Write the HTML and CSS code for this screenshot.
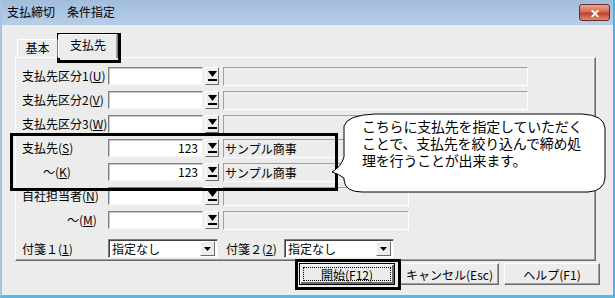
FILE: index.html
```html
<!DOCTYPE html>
<html lang="ja">
<head>
    <meta charset="UTF-8">
    <title>支払締切　条件指定</title>
    <link rel="stylesheet" href="styles.css">
</head>
<body>
    <div class="window">
        <div class="titlebar">
            <span class="title">支払締切　条件指定</span>
            <span class="close-btn">✕</span>
        </div>

        <div class="content">
            <div class="tabs">
                <div class="tab">基本</div>
                <div class="tab active">支払先</div>
            </div>

            <div class="panel">
                <div class="row">
                    <label class="lbl">支払先区分1(<u>U</u>)</label>
                    <div class="field"></div>
                    <div class="drop"><svg width="9" height="10" viewBox="0 0 9 10"><polygon points="0,0 9,0 4.5,6" fill="#000"/><rect x="0" y="8" width="9" height="2" fill="#000"/></svg></div>
                    <div class="name wide"></div>
                </div>
                <div class="row">
                    <label class="lbl">支払先区分2(<u>V</u>)</label>
                    <div class="field"></div>
                    <div class="drop"><svg width="9" height="10" viewBox="0 0 9 10"><polygon points="0,0 9,0 4.5,6" fill="#000"/><rect x="0" y="8" width="9" height="2" fill="#000"/></svg></div>
                    <div class="name wide"></div>
                </div>
                <div class="row">
                    <label class="lbl">支払先区分3(<u>W</u>)</label>
                    <div class="field"></div>
                    <div class="drop"><svg width="9" height="10" viewBox="0 0 9 10"><polygon points="0,0 9,0 4.5,6" fill="#000"/><rect x="0" y="8" width="9" height="2" fill="#000"/></svg></div>
                    <div class="name wide"></div>
                </div>
                <div class="row">
                    <label class="lbl">支払先(<u>S</u>)</label>
                    <div class="field num">123</div>
                    <div class="drop"><svg width="9" height="10" viewBox="0 0 9 10"><polygon points="0,0 9,0 4.5,6" fill="#000"/><rect x="0" y="8" width="9" height="2" fill="#000"/></svg></div>
                    <div class="name wide">サンプル商事</div>
                </div>
                <div class="row">
                    <label class="lbl to-k">～(<u>K</u>)</label>
                    <div class="field num">123</div>
                    <div class="drop"><svg width="9" height="10" viewBox="0 0 9 10"><polygon points="0,0 9,0 4.5,6" fill="#000"/><rect x="0" y="8" width="9" height="2" fill="#000"/></svg></div>
                    <div class="name wide">サンプル商事</div>
                </div>
                <div class="row">
                    <label class="lbl">自社担当者(<u>N</u>)</label>
                    <div class="field"></div>
                    <div class="drop"><svg width="9" height="10" viewBox="0 0 9 10"><polygon points="0,0 9,0 4.5,6" fill="#000"/><rect x="0" y="8" width="9" height="2" fill="#000"/></svg></div>
                    <div class="name short"></div>
                </div>
                <div class="row">
                    <label class="lbl to-m">～(<u>M</u>)</label>
                    <div class="field"></div>
                    <div class="drop"><svg width="9" height="10" viewBox="0 0 9 10"><polygon points="0,0 9,0 4.5,6" fill="#000"/><rect x="0" y="8" width="9" height="2" fill="#000"/></svg></div>
                    <div class="name short"></div>
                </div>
                <div class="row sel-row">
                    <label class="lbl">付箋１(<u>1</u>)</label>
                    <div class="select">
                        <span>指定なし</span>
                        <span class="sel-btn"><svg width="7" height="4" viewBox="0 0 7 4"><polygon points="0,0 7,0 3.5,4" fill="#000"/></svg></span>
                    </div>
                    <label class="lbl2">付箋２(<u>2</u>)</label>
                    <div class="select">
                        <span>指定なし</span>
                        <span class="sel-btn"><svg width="7" height="4" viewBox="0 0 7 4"><polygon points="0,0 7,0 3.5,4" fill="#000"/></svg></span>
                    </div>
                </div>
            </div>

            <div class="buttons">
                <button class="btn start"><span class="focus">開始(F12)</span></button>
                <button class="btn cancel">キャンセル(Esc)</button>
                <button class="btn help">ヘルプ(F1)</button>
            </div>
        </div>

        <!-- annotations drawn over the dialog -->
        <div class="mark mark-tab"></div>
        <div class="mark mark-rows"></div>
        <div class="mark mark-start"></div>

        <div class="bubble">
            <svg width="280" height="84" viewBox="0 0 280 84">
                <path d="M14 14 Q17 3 45 2 L252 2 Q274 3 275 16 L275 66 Q274 79 258 80 L32 80 Q15 80 14 68 L14 66 Q9 62 2 60 Q11 55 14 45 Z" fill="#fff" stroke="#000" stroke-width="1"/>
            </svg>
            <p class="bubble-text">こちらに支払先を指定していただく<br>ことで、支払先を絞り込んで締め処<br>理を行うことが出来ます。</p>
        </div>
    </div>
</body>
</html>
```

FILE: styles.css
```css
* {
    margin: 0;
    padding: 0;
    box-sizing: border-box;
}

body {
    width: 615px;
    height: 298px;
    overflow: hidden;
    font-family: "Noto Sans CJK JP", "Liberation Sans", sans-serif;
    font-size: 12px;
    color: #000;
    background: #fff;
}

u {
    text-decoration: underline;
    text-underline-offset: 1px;
}

.window {
    position: relative;
    width: 615px;
    height: 298px;
    background: #ececec;
    border-left: 2px solid #a9c4e2;
    border-right: 2px solid #49b2e6;
    border-bottom: 3px solid #52b9ea;
}

.titlebar {
    height: 25px;
    display: flex;
    align-items: center;
    padding: 0 3px 2px 5px;
    background: linear-gradient(#a2bddc, #b7cee8);
}

.title {
    font-size: 12px;
    line-height: 12px;
}

.close-btn {
    margin-left: auto;
    width: 31px;
    height: 17px;
    margin-top: 2px;
    border: 1px solid #6b2a22;
    border-radius: 3px;
    background: linear-gradient(#eca794, #d56a52 45%, #c0412b 55%, #dd8c74);
    color: #fff;
    font-size: 12px;
    font-weight: bold;
    line-height: 15px;
    text-align: center;
}

.content {
    padding: 9px 0 0 13px;
}

/* tabs */
.tabs {
    display: flex;
    align-items: flex-end;
    height: 23px;
    padding-left: 2px;
    position: relative;
    z-index: 1;
}

.tab {
    width: 41px;
    height: 18px;
    border-top: 1px solid #fff;
    border-left: 1px solid #fff;
    border-right: 1px solid #808080;
    text-align: center;
    line-height: 16px;
    background: #ececec;
    border-radius: 2px 2px 0 0;
}

.tab.active {
    width: 60px;
    height: 24px;
    margin-bottom: -1px;
    line-height: 20px;
    box-shadow: inset -1px 0 0 #a0a0a0;
}

/* main panel */
.panel {
    width: 581px;
    height: 204px;
    border-top: 1px solid #fff;
    border-left: 1px solid #fff;
    border-right: 1px solid #6a6a6a;
    border-bottom: 1px solid #6a6a6a;
    box-shadow: inset -1px -1px 0 #a0a0a0;
    padding: 9px 0 0 6px;
    display: flex;
    flex-direction: column;
    gap: 6px;
}

.row {
    display: flex;
    align-items: center;
    height: 18px;
}

.lbl {
    width: 86px;
    line-height: 18px;
    white-space: nowrap;
}

.lbl.to-k {
    padding-left: 21px;
}

.lbl.to-m {
    padding-left: 45px;
}

.field {
    width: 95px;
    height: 18px;
    background: #fff;
    border: 1px solid;
    border-color: #7e7e7e #f4f4f4 #f4f4f4 #7e7e7e;
    box-shadow: inset 1px 1px 0 #c8c8c8;
    line-height: 16px;
}

.field.num {
    text-align: right;
    padding-right: 4px;
}

.drop {
    width: 14px;
    height: 18px;
    margin-left: 2px;
    border: 1px solid;
    border-color: #fff #6a6a6a #6a6a6a #fff;
    background: #ececec;
    display: flex;
    align-items: center;
    justify-content: center;
}

.name {
    height: 19px;
    margin-left: 4px;
    border: 1px solid;
    border-color: #a0a0a0 #fff #fff #a0a0a0;
    line-height: 17px;
    padding-left: 1px;
}

.name.wide {
    width: 305px;
}

.name.short {
    width: 186px;
}

.sel-row {
    margin-top: 4px;
    height: 19px;
}

.select {
    width: 110px;
    height: 19px;
    background: #fff;
    border: 1px solid;
    border-color: #7e7e7e #f4f4f4 #f4f4f4 #7e7e7e;
    box-shadow: inset 1px 1px 0 #404040;
    display: flex;
    align-items: center;
    padding: 0 2px 0 3px;
}

.select span:first-child {
    flex: 1;
}

.sel-btn {
    width: 15px;
    height: 15px;
    border: 1px solid;
    border-color: #fff #6a6a6a #6a6a6a #fff;
    background: #ececec;
    display: flex;
    align-items: center;
    justify-content: center;
}

.lbl2 {
    width: 58px;
    margin-left: 8px;
    white-space: nowrap;
}

/* bottom buttons */
.buttons {
    display: flex;
    justify-content: flex-end;
    gap: 5px;
    padding-right: 13px;
    margin-top: 2px;
}

.btn {
    height: 22px;
    font-family: inherit;
    font-size: 12px;
    background: #ececec;
    border: 1px solid;
    border-color: #fff #6a6a6a #6a6a6a #fff;
    box-shadow: inset -1px -1px 0 #a0a0a0;
    color: #000;
}

.btn.start {
    width: 96px;
    border: 1px solid #000;
    box-shadow: inset 1px 1px 0 #fff, inset -2px -2px 0 #6a6a6a;
    padding: 3px;
}

.btn.start .focus {
    display: block;
    height: 14px;
    line-height: 13px;
    border: 1px dotted #000;
}

.btn.cancel {
    width: 99px;
}

.btn.help {
    width: 96px;
}

/* annotation overlays */
.mark {
    position: absolute;
    border: 3px solid #000;
}

.mark-tab {
    left: 55px;
    top: 33px;
    width: 64px;
    height: 30px;
}

.mark-rows {
    left: 8px;
    top: 133px;
    width: 328px;
    height: 58px;
}

.mark-start {
    left: 293px;
    top: 259px;
    width: 106px;
    height: 31px;
}

.bubble {
    position: absolute;
    left: 328px;
    top: 112px;
    width: 280px;
    height: 84px;
}

.bubble svg {
    display: block;
}

.bubble-text {
    position: absolute;
    left: 32px;
    top: 6px;
    font-size: 14px;
    line-height: 17px;
    white-space: nowrap;
    letter-spacing: -0.2px;
}
```
